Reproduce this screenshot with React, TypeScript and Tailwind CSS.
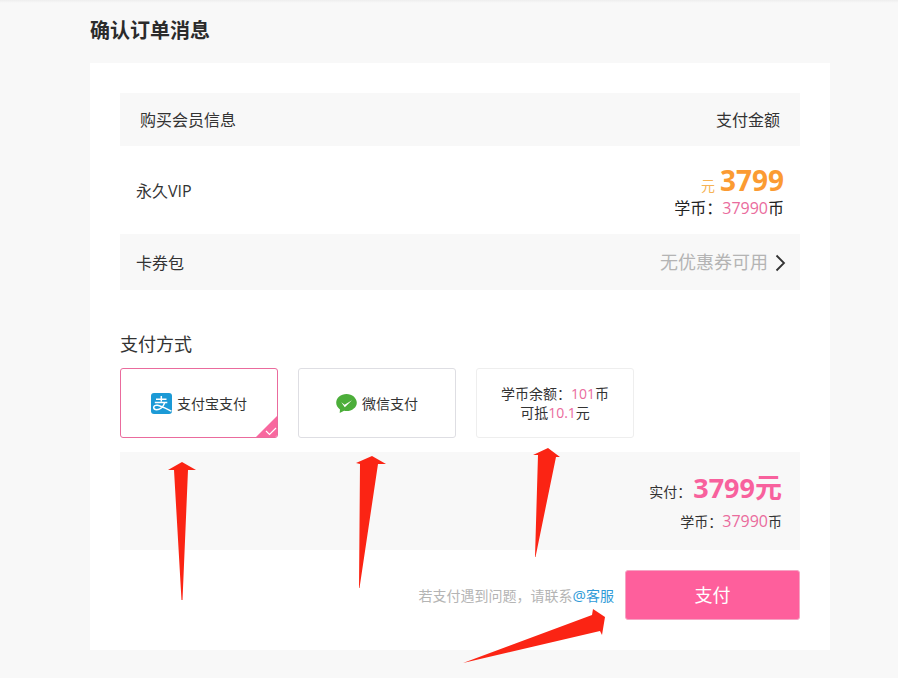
const font = { fontFamily: '"Open Sans", "Noto Sans CJK SC", sans-serif' };

function Arrow({ className, points, viewBox }: { className: string; points: string; viewBox: string }) {
  return (
    <svg className={className} viewBox={viewBox} fill="#fb2414">
      <polygon points={points} />
    </svg>
  );
}

function Alipay() {
  return (
    <svg width="21" height="21" viewBox="0 0 21 21">
      <rect width="21" height="21" rx="3" fill="#1c9ad6" />
      <path d="M5 6.200h10.500M10.300 3v5.500M3.800 9.500h12.500M13.700 9.700c-1.500 4.300-5 7-8 7-2 0-3-1-3-2.200 0-1.700 1.800-2.600 3.800-2.300 3.400.5 8 3 14 6" fill="none" stroke="#fff" strokeWidth="1.500" />
    </svg>
  );
}

function Wechat() {
  return (
    <svg width="21" height="19" viewBox="0 0 21 19">
      <path d="M10.500 0C4.800 0 .2 3.900.2 8.700c0 2.700 1.500 5.100 3.800 6.700L3.700 19l4.400-2.300c.8.200 1.600.3 2.400.3 5.700 0 10.300-3.700 10.300-8.300S16.200 0 10.500 0z" fill="#4cae3a" />
      <path d="M5.300 8.300l3.300 2.400 7.400-4.500-7.200 7z" fill="#fff" />
    </svg>
  );
}

export default function App() {
  return (
    <div className="relative h-[678px] w-[898px] overflow-hidden bg-[#f8f8f8] text-[#333333]" style={font}>
      <div className="h-[3px] bg-gradient-to-b from-[#eeeeee] to-[#f8f8f8]" />
      <h1 className="ml-[90px] mt-[14px] h-[46px] text-[20px] font-bold leading-[28px] text-[#2b2b2b]">确认订单消息</h1>
      <main className="ml-[90px] h-[587px] w-[740px] bg-white px-[30px] pt-[30px]">
        <div className="flex h-[53px] items-center justify-between bg-[#f8f8f8] px-5 text-[16px]">
          <span>购买会员信息</span>
          <span>支付金额</span>
        </div>
        <div className="flex h-[88px] items-center justify-between pl-4 pr-4 text-[16px]">
          <span className="mt-[2px]">永久VIP</span>
          <div className="text-right leading-none">
            <div className="flex items-baseline justify-end gap-[5px]">
              <span className="text-[14px] text-[#f6b354]">元</span>
              <span className="text-[28px] font-bold leading-[32px] text-[#fb9b32]">3799</span>
            </div>
            <div className="mt-[3px] text-[16px] leading-[18px] text-[#222222]">
              学币：<span className="text-[#ea6b9d]">37990</span>币
            </div>
          </div>
        </div>
        <div className="flex h-[56px] items-center justify-between bg-[#f8f8f8] pl-4 pr-[14px] pt-[1px] text-[16px]">
          <span>卡券包</span>
          <div className="flex items-center gap-[7px]">
            <span className="text-[18px] text-[#b4b4b4]">无优惠券可用</span>
            <svg width="11" height="18" viewBox="0 0 11 18" fill="none" stroke="#333333" strokeWidth="1.800">
              <path d="M1.500 1.500L9 9l-7.500 7.500" />
            </svg>
          </div>
        </div>
        <h2 className="mt-[41px] text-[18px] leading-[26px] text-[#333333]">支付方式</h2>
        <div className="mt-[11px] flex gap-5">
          <div className="relative flex h-[70px] w-[158px] items-center justify-center gap-[5px] overflow-hidden rounded-[3px] border border-[#ea6b9d] text-[14px]">
            <Alipay />
            <span>支付宝支付</span>
            <svg className="absolute bottom-0 right-0" width="21" height="21" viewBox="0 0 21 21">
              <polygon points="21,0 21,21 0,21" fill="#f8689f" />
              <path d="M10 15l3.500 3.500L20 12" fill="none" stroke="#fff" strokeWidth="1.200" />
            </svg>
          </div>
          <div className="flex h-[70px] w-[158px] items-center justify-center gap-[5px] rounded-[3px] border border-[#dedee3] text-[14px]">
            <Wechat />
            <span>微信支付</span>
          </div>
          <div className="flex h-[70px] w-[158px] flex-col items-center justify-center rounded-[3px] border border-[#eeeeee] text-[14px] leading-[19px]">
            <div>学币余额：<span className="text-[#ea6b9d]">101</span>币</div>
            <div>可抵<span className="text-[#ea6b9d]">10.1</span>元</div>
          </div>
        </div>
        <div className="mt-[14px] flex h-[98px] flex-col items-end justify-center bg-[#f8f8f8] pr-[18px]">
          <div className="flex items-center gap-[2px]">
            <span className="mt-[6px] text-[14px]">实付：</span>
            <span className="text-[27px] font-bold leading-[36px] text-[#f8619d]">3799元</span>
          </div>
          <div className="mt-[5px] text-[14px] leading-[20px]">
            学币：<span className="text-[16px] text-[#ea6b9d]">37990</span>币
          </div>
        </div>
        <div className="mt-5 flex items-center justify-end gap-[11px]">
          <span className="text-[14px] text-[#b4b4b4]">若支付遇到问题，请联系<span className="text-[#2f9bd8]"><span className="text-[15px]">@</span>客服</span></span>
          <button className="h-[50px] w-[175px] rounded-[3px] border border-[#f6a4c4] bg-[#fe5f9c] text-[18px] text-white">支付</button>
        </div>
      </main>
      <Arrow className="absolute left-[168px] top-[462px] h-[138px] w-[28px]" viewBox="0 0 28 138" points="14,0 28,8 20,8 14.500,138 13.500,138 6,8 0,8" />
      <Arrow className="absolute left-[356px] top-[456px] h-[132px] w-[30px]" viewBox="0 0 30 132" points="16,0 30,8 22,8 3.500,132 3,132 4,8 0,7" />
      <Arrow className="absolute left-[532px] top-[447px] h-[110px] w-[30px]" viewBox="0 0 30 110" points="16,1 28,10 24,10 3.500,110 3,110 6,8 1,8" />
      <Arrow className="absolute left-[462px] top-[608px] h-[56px] w-[148px]" viewBox="0 0 148 56" points="130,7 131,1 143,9 140,27 138,23 1,55" />
    </div>
  );
}
